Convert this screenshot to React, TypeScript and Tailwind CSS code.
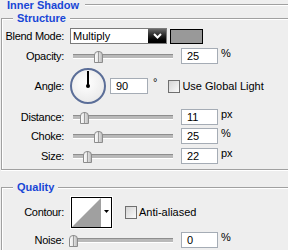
import React from 'react';

// Photoshop "Layer Style > Inner Shadow" settings pane

const Line = () => <div className="h-px bg-[#a0a0a0] shadow-[0_1px_0_#fff]" />;

const GroupHeader = ({ title }: { title: string }) => (
  <div className="flex items-start h-[12px]">
    <div className="ml-[1px] mt-[6px] w-[12px] h-[6px] border-l border-t border-[#a0a0a0] shadow-[inset_1px_1px_0_#fff]" />
    <div className="px-[4px] font-bold text-[#1846d6] leading-[12px]">{title}</div>
    <div className="flex-1 mt-[6px]">
      <Line />
    </div>
  </div>
);

const Label = ({ text }: { text: string }) => (
  <div className="w-[62px] text-right mr-[6px] leading-[13px] tracking-[-0.3px] whitespace-nowrap">{text}</div>
);

const Field = ({ value, w = 'w-[37px]' }: { value: string; w?: string }) => (
  <div className={`h-[16px] ${w} bg-white border border-[#a5acb5] pl-[5px] leading-[14px]`}>{value}</div>
);

const Unit = ({ text }: { text: string }) => (
  <div className="self-start ml-[3px] leading-[11px]">{text}</div>
);

const Slider = ({ pos }: { pos: number }) => (
  <div className="relative w-[106px] h-[16px] px-[3px] flex items-center">
    <div className="w-[100px] h-[4px] bg-[#b9b9b9] border-t border-[#8e8e8e] shadow-[0_1px_0_#fff]" />
    <div
      className="absolute top-[3px] w-[9px] h-[12px] rounded-t-[4px] border border-[#8c8c8c] bg-gradient-to-r from-[#fafafa] via-[#e6e6e6] to-[#bdbdbd] flex justify-center"
      style={{ left: 3 + pos - 4 }}
    >
      <div className="w-px h-full bg-[#9a9a9a]" />
    </div>
  </div>
);

const Checkbox = () => (
  <div className="w-[12px] h-[13px] border border-[#6f6f6f] bg-gradient-to-br from-[#d4d4d4] to-[#fafafa]" />
);

const SliderRow = ({ label, pos, value, unit, mt }: { label: string; pos: number; value: string; unit: string; mt: string }) => (
  <div className={`flex items-center ${mt}`}>
    <Label text={label} />
    <Slider pos={pos} />
    <div className="ml-[5px]">
      <Field value={value} />
    </div>
    <Unit text={unit} />
  </div>
);

export default function App() {
  return (
    <div className="w-[288px] h-[250px] overflow-hidden bg-[#eeeeee] text-black text-[11px] font-['Liberation_Sans',Arial,sans-serif]">
      {/* Title */}
      <div className="h-[10px] flex items-start pl-[7px]">
        <div className="font-bold text-[#1846d6] leading-[10px]">Inner Shadow</div>
        <div className="flex-1 ml-[6px] mt-[4px]">
          <Line />
        </div>
      </div>

      {/* Structure */}
      <div className="mt-[2px]">
        <GroupHeader title="Structure" />
        <div className="ml-[1px] border-l border-b border-[#a0a0a0] shadow-[inset_1px_0_0_#fff,0_1px_0_#fff] pt-[4px] pb-[5px]">
          <div className="flex items-center">
            <Label text="Blend Mode:" />
            <div className="flex w-[97px] h-[16px] border border-[#7b7b7b] bg-white">
              <div className="flex-1 pl-[2px] leading-[14px]">Multiply</div>
              <div className="w-[18px] h-full bg-gradient-to-b from-[#6a6a6a] via-[#222] to-[#000] flex items-center justify-center">
                <svg width="9" height="6" viewBox="0 0 9 6">
                  <polyline points="1,1 4.5,4.5 8,1" fill="none" stroke="#fff" strokeWidth="2" />
                </svg>
              </div>
            </div>
            <div className="ml-[3px] w-[33px] h-[15px] bg-[#999999] border border-black" />
          </div>

          <SliderRow label="Opacity:" pos={25} value="25" unit="%" mt="mt-[4px]" />

          <div className="flex items-center mt-[4px]">
            <Label text="Angle:" />
            <div className="relative w-[36px] h-[36px] rounded-full border-2 border-[#5b6e98] bg-[radial-gradient(circle_at_45%_40%,#ffffff,#e4e4e4)]">
              <div className="absolute left-[15px] top-[1px] w-[2px] h-[15px] bg-black" />
              <div className="absolute left-[14px] top-[14px] w-[4px] h-[4px] rounded-full bg-black" />
            </div>
            <div className="ml-[4px]">
              <Field value="90" w="w-[38px]" />
            </div>
            <div className="self-start mt-[10px] ml-[5px] leading-[8px]">°</div>
            <div className="ml-[11px]">
              <Checkbox />
            </div>
            <div className="ml-[2px] leading-[13px]">Use Global Light</div>
          </div>

          <SliderRow label="Distance:" pos={11} value="11" unit="px" mt="mt-[5px]" />
          <SliderRow label="Choke:" pos={25} value="25" unit="%" mt="mt-[3px]" />
          <SliderRow label="Size:" pos={14} value="22" unit="px" mt="mt-[4px]" />
        </div>
      </div>

      {/* Quality */}
      <div className="mt-[11px]">
        <GroupHeader title="Quality" />
        <div className="ml-[1px] border-l border-[#a0a0a0] shadow-[inset_1px_0_0_#fff] pt-[3px] pb-[20px]">
          <div className="flex items-center">
            <Label text="Contour:" />
            <div className="border border-white">
              <div className="flex w-[41px] h-[31px] border border-black bg-white">
                <svg width="29" height="29" viewBox="0 0 29 29">
                  <polygon points="0,29 29,0 29,29" fill="#a0a0a0" />
                </svg>
                <div className="flex-1 flex justify-center pt-[12px]">
                  <svg width="5" height="3" viewBox="0 0 5 3">
                    <polygon points="0,0 5,0 2.5,3" fill="#000" />
                  </svg>
                </div>
              </div>
            </div>
            <div className="ml-[12px]">
              <Checkbox />
            </div>
            <div className="ml-[2px] leading-[13px]">Anti-aliased</div>
          </div>

          <SliderRow label="Noise:" pos={0} value="0" unit="%" mt="mt-[3px]" />
        </div>
      </div>
    </div>
  );
}
